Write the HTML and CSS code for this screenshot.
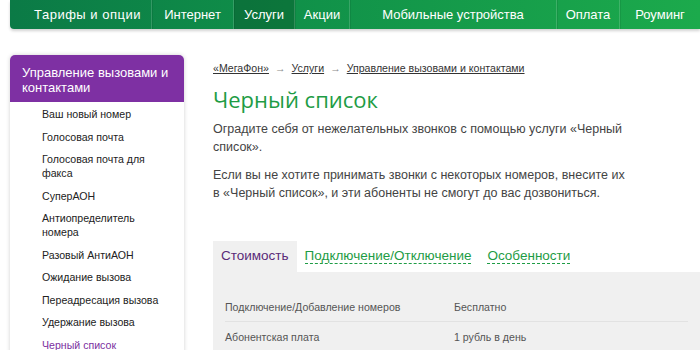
FILE: index.html
```html
<!DOCTYPE html>
<html lang="ru">
<head>
<meta charset="utf-8">
<link rel="stylesheet" href="styles.css">
</head>
<body>
<nav class="topnav">
  <a class="nav-item w1">Тарифы и опции</a>
  <a class="nav-item w2">Интернет</a>
  <a class="nav-item w3 active">Услуги</a>
  <a class="nav-item w4">Акции</a>
  <a class="nav-item w5">Мобильные устройства</a>
  <a class="nav-item w6">Оплата</a>
  <a class="nav-item w7">Роуминг</a>
</nav>
<div class="page">
  <aside class="sidebar">
    <div class="side-head">Управление вызовами и контактами</div>
    <ul class="side-list">
      <li>Ваш новый номер</li>
      <li>Голосовая почта</li>
      <li>Голосовая почта для факса</li>
      <li>СуперАОН</li>
      <li>Антиопределитель номера</li>
      <li>Разовый АнтиАОН</li>
      <li>Ожидание вызова</li>
      <li>Переадресация вызова</li>
      <li>Удержание вызова</li>
      <li class="current">Черный список</li>
    </ul>
  </aside>
  <main class="content">
    <div class="crumbs"><a>«МегаФон»</a><span class="arr">→</span><a>Услуги</a><span class="arr">→</span><a>Управление вызовами и контактами</a></div>
    <h1 class="title">Черный список</h1>
    <p class="text">Оградите себя от нежелательных звонков с помощью услуги «Черный список».</p>
    <p class="text">Если вы не хотите принимать звонки с некоторых номеров, внесите их<br>в «Черный список», и эти абоненты не смогут до вас дозвониться.</p>
    <div class="tabs">
      <span class="tab active">Стоимость</span>
      <span class="tab"><span class="dash">Подключение/Отключение</span></span>
      <span class="tab"><span class="dash">Особенности</span></span>
    </div>
    <div class="panel">
      <div class="row"><span class="c1">Подключение/Добавление номеров</span><span class="c2">Бесплатно</span></div>
      <div class="row"><span class="c1">Абонентская плата</span><span class="c2">1 рубль в день</span></div>
    </div>
  </main>
</div>
</body>
</html>
```
FILE: styles.css
```css
* { box-sizing: border-box; }
html, body { margin: 0; padding: 0; background: #fff; }
body {
  font-family: "Liberation Sans", Arial, sans-serif;
  width: 700px;
  height: 350px;
  overflow: hidden;
}
.topnav {
  display: flex;
  margin-left: 10px;
  height: 29px;
  background: linear-gradient(90deg, #0b7a46 0%, #109049 40%, #1caa4c 100%);
  border-bottom-left-radius: 4px;
  box-shadow: 0 2px 3px rgba(0,0,0,0.18);
}
.nav-item {
  display: flex;
  align-items: center;
  justify-content: center;
  color: #fff;
  font-size: 13px;
  border-right: 1px solid rgba(255,255,255,0.16);
  box-shadow: 1px 0 0 rgba(0,0,0,0.08);
}
.nav-item.active { background: rgba(0,40,20,0.25); }
.w1 { width: 142px; padding-left: 14px; letter-spacing: 0.5px; }
.w2 { width: 82px; }
.w3 { width: 61px; }
.w4 { width: 55px; }
.w5 { width: 207px; }
.w6 { width: 63px; }
.w7 { width: 80px; border-right: none; }

.page {
  display: flex;
  padding-left: 10px;
  margin-top: 26px;
}
.sidebar {
  width: 174px;
  flex: none;
  background: #fff;
  border-radius: 5px 5px 0 0;
  box-shadow: 0 0 4px rgba(0,0,0,0.18);
}
.side-head {
  background: #7e30a3;
  color: #fff;
  font-size: 13px;
  line-height: 15px;
  padding: 10px 12px 9px 12px;
  border-radius: 5px 5px 0 0;
  height: 47px;
}
.side-list {
  list-style: none;
  margin: 0;
  padding: 1px 10px 0 32px;
  font-size: 10.6px;
  line-height: 14px;
  color: #222;
}
.side-list li { padding: 4px 0 4.5px; }
.side-list li.current { color: #7b2fa0; }

.content {
  padding-left: 29px;
  flex: 1;
}
.crumbs {
  font-size: 10.6px;
  color: #333;
  margin-top: 6px;
  line-height: 14px;
}
.crumbs a { text-decoration: underline; color: #333; }
.crumbs .arr { color: #888; margin: 0 6px; }
.title {
  font-family: "Open Sans", "Liberation Sans", sans-serif;
  font-weight: 400;
  color: #1e9c45;
  font-size: 22px;
  line-height: 30px;
  margin: 9px 0 6px;
}
.text {
  font-size: 12.5px;
  line-height: 18px;
  color: #444;
  margin: 0 0 10px;
  width: 420px;
}
.tabs {
  display: flex;
  margin-top: 39px;
  font-size: 13.5px;
}
.tab {
  padding: 5px 8px 6px;
  color: #1e9c45;
  line-height: 20px;
}
.tab.active { background: #f0f0f0; color: #5a2a78; }
.dash { border-bottom: 1px dashed #1e9c45; }
.panel {
  background: #f0f0f0;
  padding: 20px 12px 0 12px;
  height: 100px;
}
.row {
  display: flex;
  font-size: 10.6px;
  color: #555;
  height: 30px;
  align-items: center;
  border-bottom: 1px solid #e2e2e2;
}
.c1 { width: 229px; }
```
